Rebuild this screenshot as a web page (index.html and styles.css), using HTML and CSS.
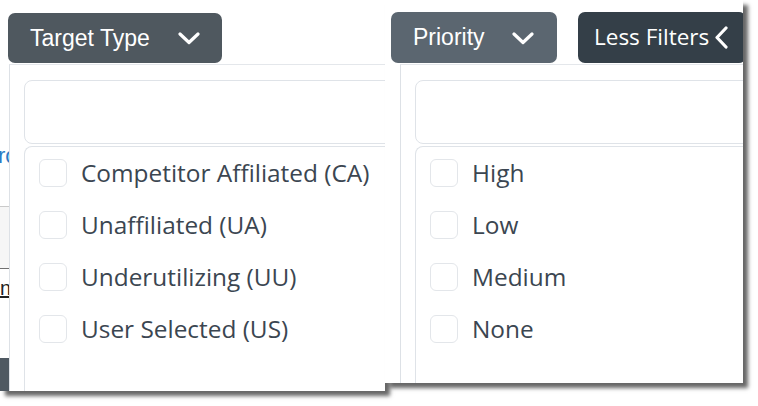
FILE: index.html
```html
<!DOCTYPE html>
<html>
<head>
<meta charset="utf-8">
<title>Filters</title>
<link rel="stylesheet" href="styles.css">
</head>
<body>
<div class="stage">
  <section class="shot shot-left">
    <div class="bar">
      <button class="btn btn-target"><span>Target Type</span>
        <svg class="chev-down" width="22" height="13" viewBox="0 0 22 13"><polyline points="2,2 11,10.5 20,2" fill="none" stroke="#fff" stroke-width="3.2" stroke-linecap="round" stroke-linejoin="round"/></svg>
      </button>
    </div>
    <div class="behind">
      <span class="behind-link">ro</span>
      <div class="behind-row"></div>
      <span class="behind-u">n</span>
      <div class="behind-dark"></div>
    </div>
    <div class="menu">
      <div class="search"></div>
      <ul class="opts">
        <li><span class="cb"></span>Competitor Affiliated (CA)</li>
        <li><span class="cb"></span>Unaffiliated (UA)</li>
        <li><span class="cb"></span>Underutilizing (UU)</li>
        <li><span class="cb"></span>User Selected (US)</li>
      </ul>
    </div>
  </section>
  <section class="shot shot-right">
    <div class="bar bar-right">
      <button class="btn btn-priority"><span>Priority</span>
        <svg class="chev-down" width="22" height="13" viewBox="0 0 22 13"><polyline points="2,2 11,10.5 20,2" fill="none" stroke="#fff" stroke-width="3.2" stroke-linecap="round" stroke-linejoin="round"/></svg>
      </button>
      <button class="btn btn-less"><span>Less Filters</span>
        <svg class="chev-left" width="15" height="23" viewBox="0 0 15 23"><polyline points="12,2 3,11.5 12,21" fill="none" stroke="#fff" stroke-width="3.2" stroke-linecap="round" stroke-linejoin="round"/></svg>
      </button>
    </div>
    <div class="menu">
      <div class="search"></div>
      <ul class="opts">
        <li><span class="cb"></span>High</li>
        <li><span class="cb"></span>Low</li>
        <li><span class="cb"></span>Medium</li>
        <li><span class="cb"></span>None</li>
      </ul>
    </div>
  </section>
</div>
</body>
</html>
```

FILE: styles.css
```css
* { box-sizing: border-box; }
html, body { margin: 0; padding: 0; background: #fff; }
body { width: 758px; height: 406px; overflow: hidden; }

.stage {
  display: flex;
  align-items: flex-start;
}

.shot {
  position: relative;
  overflow: hidden;
  background: #fff;
  box-shadow: 5px 5px 4px rgba(0, 0, 0, 0.6);
}
.shot-left { width: 385px; height: 391px; z-index: 1; }
.shot-right { width: 358px; height: 383px; z-index: 2; }

.bar {
  height: 64px;
  padding: 13px 0 0 8px;
  display: flex;
  align-items: flex-start;
}
.bar-right { padding: 12px 0 0 6px; gap: 21px; }

.btn {
  height: 50px;
  border: 0;
  border-radius: 7px;
  color: #fff;
  font-family: "Liberation Sans", Arial, sans-serif;
  font-size: 23px;
  display: flex;
  align-items: center;
  justify-content: space-between;
  flex-shrink: 0;
  cursor: pointer;
}
.btn-target { width: 214px; padding: 0 22px 0 22px; background: #4f585f; }
.btn-priority { width: 166px; padding: 0 23px 0 22px; background: #5b6670; height: 51px; }
.btn-less {
  width: 168px;
  padding: 0 0 2px 16px;
  justify-content: flex-start;
  gap: 5px;
  background: #343f48;
  font-family: "Open Sans", sans-serif;
  font-size: 22.5px;
  height: 51px;
}
.chev-down { display: block; margin-top: 1px; }
.chev-left { display: block; margin-top: 2px; }

.behind { width: 9px; overflow: hidden; }
.behind-link {
  display: block;
  margin-top: 80px;
  height: 26px;
  line-height: 24px;
  font-family: "Liberation Sans", Arial, sans-serif;
  font-size: 22px;
  color: #2e7bc4;
  white-space: nowrap;
  margin-left: -2px;
}
.behind-row {
  margin-top: 36px;
  height: 63px;
  background: #f6f6f6;
  border-top: 1px solid #cacaca;
  border-bottom: 1px solid #707070;
}
.behind-u {
  display: block;
  margin-top: 9px;
  font-family: "Liberation Sans", Arial, sans-serif;
  font-size: 20px;
  line-height: 20px;
  color: #222;
  text-decoration: underline;
}
.behind-dark {
  margin-top: 60px;
  height: 40px;
  background: #4f5962;
}

.menu {
  position: absolute;
  top: 64px;
  left: 9px;
  right: -40px;
  bottom: -20px;
  background: #fff;
  border-top: 1px solid #e4e7eb;
  border-left: 1px solid #dde1e6;
  padding: 15px 0 0 14px;
}
.shot-right .menu { left: 15px; }

.search {
  height: 64px;
  border: 1px solid #dfe3e8;
  border-radius: 8px;
  background: #fff;
}

.opts {
  list-style: none;
  margin: 2px 0 0 0;
  padding: 12px 0 0 14px;
  height: 400px;
  border-left: 1px solid #dfe3e8;
  border-top: 1px solid #dfe3e8;
  border-top-left-radius: 8px;
}
.opts li {
  display: flex;
  align-items: center;
  gap: 14px;
  height: 28px;
  margin-bottom: 24px;
  font-family: "Open Sans", sans-serif;
  font-size: 24.4px;
  line-height: 28px;
  color: #3b4651;
  white-space: nowrap;
}
.opts li::after { content: ""; }
.cb {
  width: 28px;
  height: 28px;
  flex-shrink: 0;
  border: 1px solid #e3e6ea;
  border-radius: 6px;
  background: #fff;
}
```
